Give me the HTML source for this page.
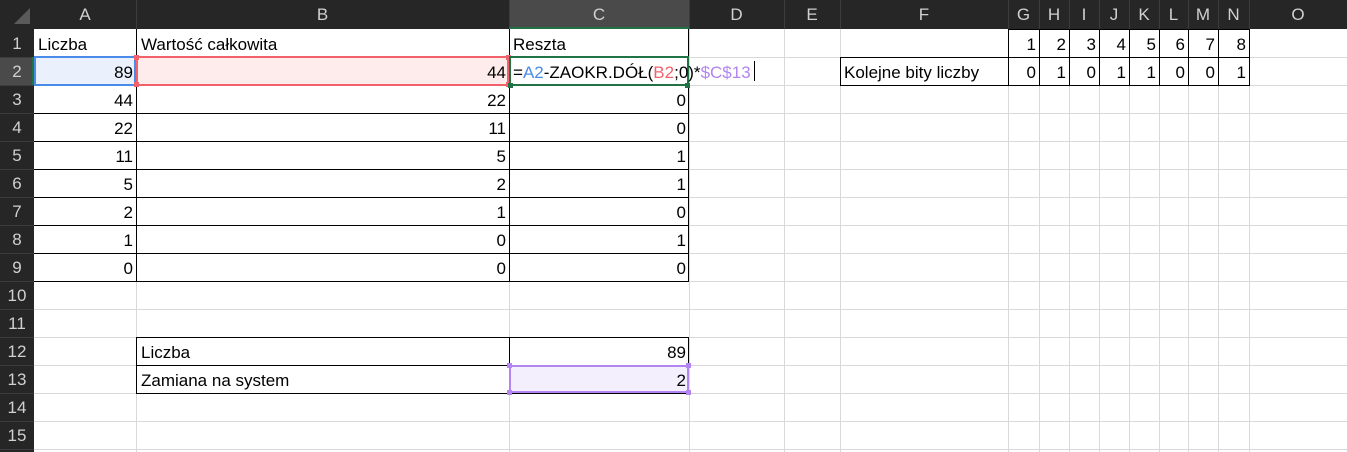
<!DOCTYPE html>
<html><head><meta charset="utf-8"><style>
body{margin:0;width:1347px;height:452px;overflow:hidden;background:#fff;font-family:"Liberation Sans",sans-serif;position:relative}
.t{position:absolute;font-size:17px;line-height:28px;height:28px;white-space:nowrap;color:#000}
.r{text-align:right}
.h{position:absolute;color:#d0d0d0;font-size:17px;text-align:center;line-height:29px;top:0;height:29px}
.rh{position:absolute;left:0;width:34px;color:#d0d0d0;font-size:17px;text-align:center;line-height:28px;height:28px}
</style></head><body>
<svg width="1347" height="452" style="position:absolute;left:0;top:0">
<rect x="0" y="0" width="1347" height="29" fill="#262626"/>
<rect x="0" y="0" width="34" height="452" fill="#262626"/>
<rect x="509" y="0" width="180" height="29" fill="#4a4a4a"/>
<rect x="0" y="57" width="34" height="28" fill="#4a4a4a"/>
<polygon points="14,24 30,24 30,8" fill="#5a5a5a"/>
<g stroke="#3c3c3c" stroke-width="1">
<line x1="136.5" y1="0" x2="136.5" y2="29"/><line x1="509.5" y1="0" x2="509.5" y2="29"/><line x1="689.5" y1="0" x2="689.5" y2="29"/><line x1="784.5" y1="0" x2="784.5" y2="29"/><line x1="840.5" y1="0" x2="840.5" y2="29"/><line x1="1008.5" y1="0" x2="1008.5" y2="29"/><line x1="1039.5" y1="0" x2="1039.5" y2="29"/><line x1="1069.5" y1="0" x2="1069.5" y2="29"/><line x1="1099.5" y1="0" x2="1099.5" y2="29"/><line x1="1129.5" y1="0" x2="1129.5" y2="29"/><line x1="1159.5" y1="0" x2="1159.5" y2="29"/><line x1="1188.5" y1="0" x2="1188.5" y2="29"/><line x1="1218.5" y1="0" x2="1218.5" y2="29"/><line x1="1249.5" y1="0" x2="1249.5" y2="29"/>
<line x1="0" y1="57.5" x2="34" y2="57.5"/><line x1="0" y1="85.5" x2="34" y2="85.5"/><line x1="0" y1="113.5" x2="34" y2="113.5"/><line x1="0" y1="141.5" x2="34" y2="141.5"/><line x1="0" y1="169.5" x2="34" y2="169.5"/><line x1="0" y1="197.5" x2="34" y2="197.5"/><line x1="0" y1="225.5" x2="34" y2="225.5"/><line x1="0" y1="253.5" x2="34" y2="253.5"/><line x1="0" y1="281.5" x2="34" y2="281.5"/><line x1="0" y1="309.5" x2="34" y2="309.5"/><line x1="0" y1="337.5" x2="34" y2="337.5"/><line x1="0" y1="365.5" x2="34" y2="365.5"/><line x1="0" y1="393.5" x2="34" y2="393.5"/><line x1="0" y1="421.5" x2="34" y2="421.5"/><line x1="0" y1="449.5" x2="34" y2="449.5"/>
</g>
<line x1="509" y1="28" x2="689" y2="28" stroke="#217346" stroke-width="2"/>
<line x1="33" y1="57" x2="33" y2="85" stroke="#217346" stroke-width="2"/>
<g stroke="#d9d9d9" stroke-width="1">
<line x1="34" y1="57.5" x2="1347" y2="57.5"/><line x1="34" y1="85.5" x2="1347" y2="85.5"/><line x1="34" y1="113.5" x2="1347" y2="113.5"/><line x1="34" y1="141.5" x2="1347" y2="141.5"/><line x1="34" y1="169.5" x2="1347" y2="169.5"/><line x1="34" y1="197.5" x2="1347" y2="197.5"/><line x1="34" y1="225.5" x2="1347" y2="225.5"/><line x1="34" y1="253.5" x2="1347" y2="253.5"/><line x1="34" y1="281.5" x2="1347" y2="281.5"/><line x1="34" y1="309.5" x2="1347" y2="309.5"/><line x1="34" y1="337.5" x2="1347" y2="337.5"/><line x1="34" y1="365.5" x2="1347" y2="365.5"/><line x1="34" y1="393.5" x2="1347" y2="393.5"/><line x1="34" y1="421.5" x2="1347" y2="421.5"/><line x1="34" y1="449.5" x2="1347" y2="449.5"/>
<line x1="136.5" y1="29" x2="136.5" y2="452"/><line x1="509.5" y1="29" x2="509.5" y2="452"/><line x1="689.5" y1="29" x2="689.5" y2="452"/><line x1="784.5" y1="29" x2="784.5" y2="452"/><line x1="840.5" y1="29" x2="840.5" y2="452"/><line x1="1008.5" y1="29" x2="1008.5" y2="452"/><line x1="1039.5" y1="29" x2="1039.5" y2="452"/><line x1="1069.5" y1="29" x2="1069.5" y2="452"/><line x1="1099.5" y1="29" x2="1099.5" y2="452"/><line x1="1129.5" y1="29" x2="1129.5" y2="452"/><line x1="1159.5" y1="29" x2="1159.5" y2="452"/><line x1="1188.5" y1="29" x2="1188.5" y2="452"/><line x1="1218.5" y1="29" x2="1218.5" y2="452"/><line x1="1249.5" y1="29" x2="1249.5" y2="452"/>
</g>
<rect x="34" y="57" width="102" height="28" fill="#eaf1fd"/>
<rect x="136" y="57" width="373" height="28" fill="#fdeceb"/>
<rect x="509" y="365" width="180" height="28" fill="#f4effd"/>
<rect x="690" y="58" width="94" height="27" fill="#fff"/>
<g stroke="#000" stroke-width="1">
<line x1="34" y1="85.5" x2="689" y2="85.5"/><line x1="34" y1="113.5" x2="689" y2="113.5"/><line x1="34" y1="141.5" x2="689" y2="141.5"/><line x1="34" y1="169.5" x2="689" y2="169.5"/><line x1="34" y1="197.5" x2="689" y2="197.5"/><line x1="34" y1="225.5" x2="689" y2="225.5"/><line x1="34" y1="253.5" x2="689" y2="253.5"/><line x1="34" y1="281.5" x2="689" y2="281.5"/>
<line x1="136.5" y1="29" x2="136.5" y2="282"/><line x1="509.5" y1="29" x2="509.5" y2="282"/><line x1="688.5" y1="29" x2="688.5" y2="282"/>
<line x1="1008" y1="29.5" x2="1249" y2="29.5"/><line x1="840" y1="57.5" x2="1249" y2="57.5"/><line x1="840" y1="85.5" x2="1249" y2="85.5"/>
<line x1="840.5" y1="57" x2="840.5" y2="86"/><line x1="1008.5" y1="29" x2="1008.5" y2="86"/><line x1="1039.5" y1="29" x2="1039.5" y2="86"/><line x1="1069.5" y1="29" x2="1069.5" y2="86"/><line x1="1099.5" y1="29" x2="1099.5" y2="86"/><line x1="1129.5" y1="29" x2="1129.5" y2="86"/><line x1="1159.5" y1="29" x2="1159.5" y2="86"/><line x1="1188.5" y1="29" x2="1188.5" y2="86"/><line x1="1218.5" y1="29" x2="1218.5" y2="86"/><line x1="1249.5" y1="29" x2="1249.5" y2="86"/>
<line x1="136" y1="337.5" x2="689" y2="337.5"/><line x1="136" y1="365.5" x2="689" y2="365.5"/><line x1="136" y1="393.5" x2="689" y2="393.5"/>
<line x1="136.5" y1="337" x2="136.5" y2="394"/><line x1="509.5" y1="337" x2="509.5" y2="394"/><line x1="688.5" y1="337" x2="688.5" y2="394"/>
</g>
<rect x="35" y="57" width="100" height="28" fill="none" stroke="#4a8bea" stroke-width="2"/>
<rect x="137" y="57" width="371" height="28" fill="none" stroke="#f1626a" stroke-width="2"/>
<g fill="#f1626a"><rect x="134" y="55" width="5" height="5"/><rect x="506" y="55" width="5" height="5"/><rect x="134" y="82" width="5" height="5"/><rect x="506" y="82" width="5" height="5"/></g>
<rect x="510" y="57" width="178" height="28" fill="none" stroke="#217346" stroke-width="2"/>
<rect x="508" y="83" width="5" height="5" fill="#217346"/><rect x="685" y="83" width="5" height="5" fill="#217346"/>
<rect x="510" y="366" width="178" height="26" fill="none" stroke="#b285f0" stroke-width="2"/>
<g fill="#b285f0"><rect x="507" y="363" width="5" height="5"/><rect x="686" y="363" width="5" height="5"/><rect x="507" y="390" width="5" height="5"/><rect x="686" y="390" width="5" height="5"/></g>
<line x1="754.5" y1="61" x2="754.5" y2="81" stroke="#000" stroke-width="1"/>
</svg>

<div class="h" style="left:34px;width:102px">A</div><div class="h" style="left:136px;width:373px">B</div><div class="h" style="left:509px;width:180px">C</div><div class="h" style="left:689px;width:95px">D</div><div class="h" style="left:784px;width:56px">E</div><div class="h" style="left:840px;width:168px">F</div><div class="h" style="left:1008px;width:31px">G</div><div class="h" style="left:1039px;width:30px">H</div><div class="h" style="left:1069px;width:30px">I</div><div class="h" style="left:1099px;width:30px">J</div><div class="h" style="left:1129px;width:30px">K</div><div class="h" style="left:1159px;width:29px">L</div><div class="h" style="left:1188px;width:30px">M</div><div class="h" style="left:1218px;width:31px">N</div><div class="h" style="left:1249px;width:98px">O</div>

<div class="rh" style="top:30px">1</div><div class="rh" style="top:58px">2</div><div class="rh" style="top:86px">3</div><div class="rh" style="top:114px">4</div><div class="rh" style="top:142px">5</div><div class="rh" style="top:170px">6</div><div class="rh" style="top:198px">7</div><div class="rh" style="top:226px">8</div><div class="rh" style="top:254px">9</div><div class="rh" style="top:282px">10</div><div class="rh" style="top:310px">11</div><div class="rh" style="top:338px">12</div><div class="rh" style="top:366px">13</div><div class="rh" style="top:394px">14</div><div class="rh" style="top:422px">15</div>

<div class="t" style="left:38px;top:31px">Liczba</div>
<div class="t" style="left:141px;top:31px">Wartość całkowita</div>
<div class="t" style="left:513px;top:31px">Reszta</div>
<div class="t" style="left:513px;top:59px"><span>=</span><span style="color:#4a8bea">A2</span>-ZAOKR.DÓŁ(<span style="color:#f1626a">B2</span>;0)*<span style="color:#b285f0">$C$13</span></div>
<div class="t" style="left:844px;top:59px">Kolejne bity liczby</div>

<div class="t r" style="left:34px;width:99px;top:59px">89</div><div class="t r" style="left:136px;width:370px;top:59px">44</div>
<div class="t r" style="left:34px;width:99px;top:87px">44</div><div class="t r" style="left:136px;width:370px;top:87px">22</div><div class="t r" style="left:509px;width:177px;top:87px">0</div>
<div class="t r" style="left:34px;width:99px;top:115px">22</div><div class="t r" style="left:136px;width:370px;top:115px">11</div><div class="t r" style="left:509px;width:177px;top:115px">0</div>
<div class="t r" style="left:34px;width:99px;top:143px">11</div><div class="t r" style="left:136px;width:370px;top:143px">5</div><div class="t r" style="left:509px;width:177px;top:143px">1</div>
<div class="t r" style="left:34px;width:99px;top:171px">5</div><div class="t r" style="left:136px;width:370px;top:171px">2</div><div class="t r" style="left:509px;width:177px;top:171px">1</div>
<div class="t r" style="left:34px;width:99px;top:199px">2</div><div class="t r" style="left:136px;width:370px;top:199px">1</div><div class="t r" style="left:509px;width:177px;top:199px">0</div>
<div class="t r" style="left:34px;width:99px;top:227px">1</div><div class="t r" style="left:136px;width:370px;top:227px">0</div><div class="t r" style="left:509px;width:177px;top:227px">1</div>
<div class="t r" style="left:34px;width:99px;top:255px">0</div><div class="t r" style="left:136px;width:370px;top:255px">0</div><div class="t r" style="left:509px;width:177px;top:255px">0</div>

<div class="t" style="left:141px;top:339px">Liczba</div><div class="t r" style="left:509px;width:177px;top:339px">89</div>
<div class="t" style="left:141px;top:367px">Zamiana na system</div><div class="t r" style="left:509px;width:177px;top:367px">2</div>

<div class="t r" style="left:1008px;width:28px;top:31px">1</div><div class="t r" style="left:1039px;width:27px;top:31px">2</div><div class="t r" style="left:1069px;width:27px;top:31px">3</div><div class="t r" style="left:1099px;width:27px;top:31px">4</div><div class="t r" style="left:1129px;width:27px;top:31px">5</div><div class="t r" style="left:1159px;width:26px;top:31px">6</div><div class="t r" style="left:1188px;width:27px;top:31px">7</div><div class="t r" style="left:1218px;width:28px;top:31px">8</div>
<div class="t r" style="left:1008px;width:28px;top:59px">0</div><div class="t r" style="left:1039px;width:27px;top:59px">1</div><div class="t r" style="left:1069px;width:27px;top:59px">0</div><div class="t r" style="left:1099px;width:27px;top:59px">1</div><div class="t r" style="left:1129px;width:27px;top:59px">1</div><div class="t r" style="left:1159px;width:26px;top:59px">0</div><div class="t r" style="left:1188px;width:27px;top:59px">0</div><div class="t r" style="left:1218px;width:28px;top:59px">1</div>
</body></html>
